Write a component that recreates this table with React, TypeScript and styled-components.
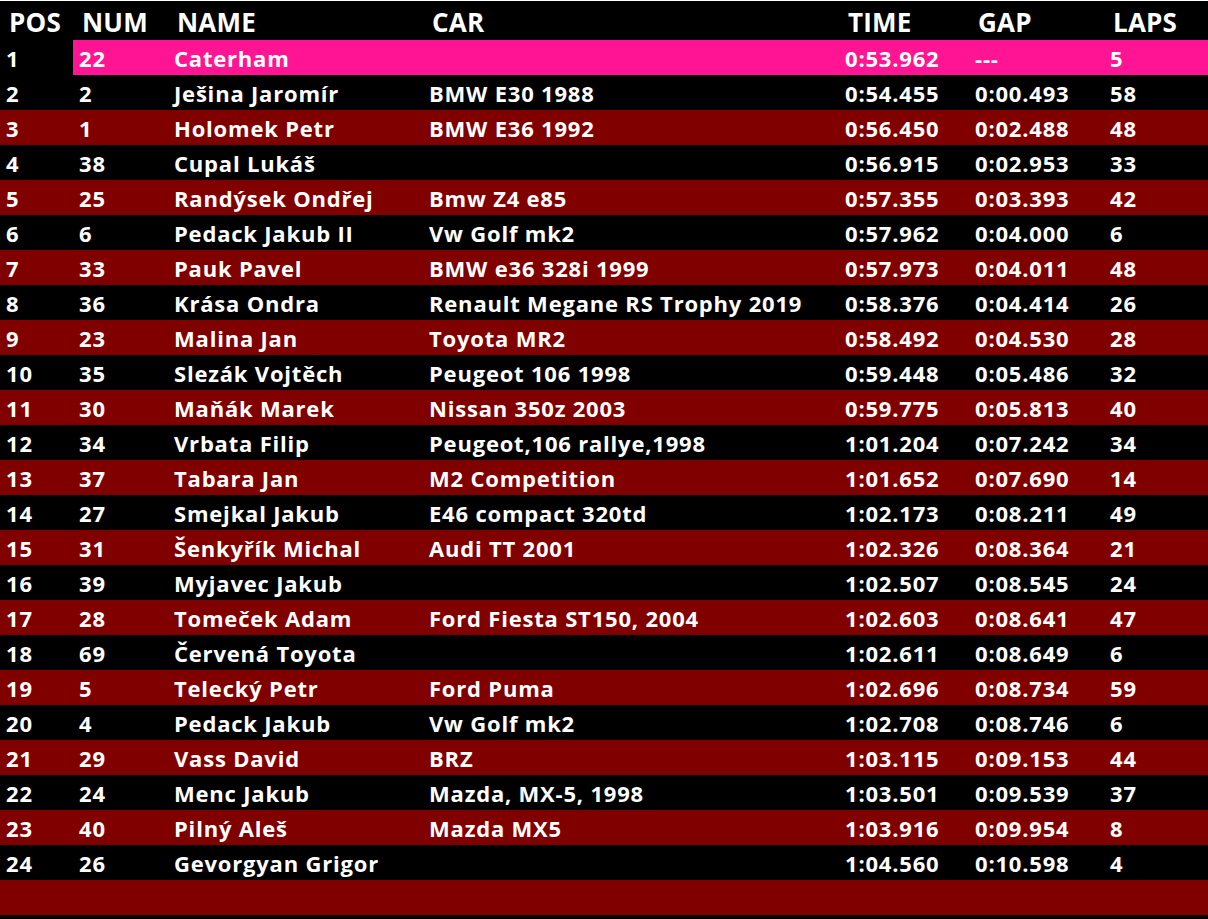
import React from 'react'
import styled, { createGlobalStyle } from 'styled-components'

type Row = [number, string, string, string, string, string, string]

const rows: Row[] = [
  [1, '22', 'Caterham', '', '0:53.962', '---', '5'],
  [2, '2', 'Ješina Jaromír', 'BMW E30 1988', '0:54.455', '0:00.493', '58'],
  [3, '1', 'Holomek Petr', 'BMW E36 1992', '0:56.450', '0:02.488', '48'],
  [4, '38', 'Cupal Lukáš', '', '0:56.915', '0:02.953', '33'],
  [5, '25', 'Randýsek Ondřej', 'Bmw Z4 e85', '0:57.355', '0:03.393', '42'],
  [6, '6', 'Pedack Jakub II', 'Vw Golf mk2', '0:57.962', '0:04.000', '6'],
  [7, '33', 'Pauk Pavel', 'BMW e36 328i 1999', '0:57.973', '0:04.011', '48'],
  [8, '36', 'Krása Ondra', 'Renault Megane RS Trophy 2019', '0:58.376', '0:04.414', '26'],
  [9, '23', 'Malina Jan', 'Toyota MR2', '0:58.492', '0:04.530', '28'],
  [10, '35', 'Slezák Vojtěch', 'Peugeot 106 1998', '0:59.448', '0:05.486', '32'],
  [11, '30', 'Maňák Marek', 'Nissan 350z 2003', '0:59.775', '0:05.813', '40'],
  [12, '34', 'Vrbata Filip', 'Peugeot,106 rallye,1998', '1:01.204', '0:07.242', '34'],
  [13, '37', 'Tabara Jan', 'M2 Competition', '1:01.652', '0:07.690', '14'],
  [14, '27', 'Smejkal Jakub', 'E46 compact 320td', '1:02.173', '0:08.211', '49'],
  [15, '31', 'Šenkyřík Michal', 'Audi TT 2001', '1:02.326', '0:08.364', '21'],
  [16, '39', 'Myjavec Jakub', '', '1:02.507', '0:08.545', '24'],
  [17, '28', 'Tomeček Adam', 'Ford Fiesta ST150, 2004', '1:02.603', '0:08.641', '47'],
  [18, '69', 'Červená Toyota', '', '1:02.611', '0:08.649', '6'],
  [19, '5', 'Telecký Petr', 'Ford Puma', '1:02.696', '0:08.734', '59'],
  [20, '4', 'Pedack Jakub', 'Vw Golf mk2', '1:02.708', '0:08.746', '6'],
  [21, '29', 'Vass David', 'BRZ', '1:03.115', '0:09.153', '44'],
  [22, '24', 'Menc Jakub', 'Mazda, MX-5, 1998', '1:03.501', '0:09.539', '37'],
  [23, '40', 'Pilný Aleš', 'Mazda MX5', '1:03.916', '0:09.954', '8'],
  [24, '26', 'Gevorgyan Grigor', '', '1:04.560', '0:10.598', '4']
]

const columns = ['POS', 'NUM', 'NAME', 'CAR', 'TIME', 'GAP', 'LAPS']
const widths = [73, 95, 255, 416, 130, 135, 104]

const GlobalStyle = createGlobalStyle`
  html, body {
    margin: 0;
    padding: 0;
    background: #000;
  }
  body {
    border-top: 1px solid #fff;
    font-family: "Open Sans", "Noto Sans", sans-serif;
    color: #fff;
  }
`

const Board = styled.div`
  width: 1208px;
  height: 918px;
  background: #000;
  display: flex;
  flex-direction: column;
`

const Grid = styled.div`
  display: grid;
  grid-template-columns: ${widths.map(w => w + 'px').join(' ')};
`

const HeaderCell = styled.div`
  height: 39px;
  padding-left: 9px;
  font-size: 26px;
  font-weight: 700;
  letter-spacing: 0.2px;
  line-height: 43px;
  white-space: nowrap;
`

const Cell = styled.div<{ $bg: string }>`
  box-sizing: border-box;
  height: 35px;
  padding: 2px 0 0 6px;
  font-size: 22px;
  font-weight: 700;
  letter-spacing: 0.8px;
  line-height: 33px;
  white-space: nowrap;
  overflow: hidden;
  background: ${props => props.$bg};
`

const Footer = styled.div`
  height: 35px;
  background: #800000;
`

const rowColor = (pos: number) => (pos === 1 ? '#ff1493' : pos % 2 === 1 ? '#800000' : '#000')

const App = () => {
  return (
    <>
      <GlobalStyle />
      <Board>
        <Grid>
          {columns.map(c => <HeaderCell key={c}>{c}</HeaderCell>)}
          {rows.map(r => r.map((v, i) => (
            <Cell key={`${r[0]}-${i}`} $bg={r[0] === 1 && i === 0 ? '#000' : rowColor(r[0])}>
              {v}
            </Cell>
          )))}
        </Grid>
        <Footer />
      </Board>
    </>
  )
}

export default App
